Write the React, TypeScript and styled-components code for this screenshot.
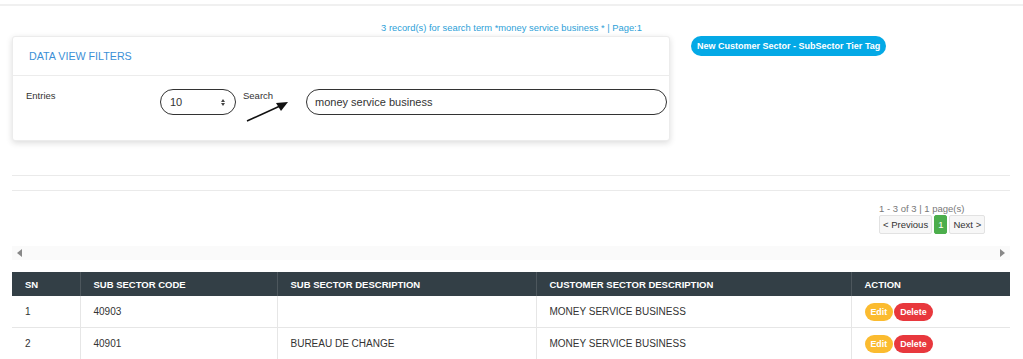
import React from "react";
import styled, { createGlobalStyle } from "styled-components";

const GlobalStyle = createGlobalStyle`
  body {
    margin: 0;
    background: #ffffff;
    font-family: "Liberation Sans", Arial, sans-serif;
    color: #333;
  }
`;

const Page = styled.div`
  width: 1023px;
  height: 359px;
  overflow: hidden;
`;

const TopRule = styled.div`
  margin-top: 4px;
  height: 2px;
  background: #f0f0f0;
`;

const Summary = styled.div`
  margin-top: 15px;
  text-align: center;
  font-size: 9.4px;
  line-height: 13px;
  color: #2e9fd8;
`;

const TopRow = styled.div`
  display: flex;
  align-items: flex-start;
  gap: 21px;
  padding: 2px 0 0 12px;
`;

const Card = styled.div`
  width: 658px;
  height: 105px;
  box-sizing: border-box;
  background: #fff;
  border: 1px solid #ececec;
  border-radius: 3px;
  box-shadow: 0 2px 6px rgba(0, 0, 0, 0.14);
`;

const CardHeader = styled.div`
  height: 39px;
  box-sizing: border-box;
  padding: 13px 0 0 16px;
  border-bottom: 1px solid #ececec;
  font-size: 10.7px;
  color: #3b8fd6;
`;

const CardBody = styled.div`
  display: flex;
  align-items: flex-start;
  padding: 13px 0 0 13px;
`;

const Label = styled.span<{ $width?: number }>`
  display: block;
  width: ${(p) => (p.$width ? `${p.$width}px` : "auto")};
  font-size: 9.5px;
  line-height: 12px;
  color: #333;
  padding-top: 1px;
`;

const SelectBox = styled.div`
  width: 76px;
  height: 26px;
  box-sizing: border-box;
  border: 1px solid #333;
  border-radius: 13px;
  display: flex;
  align-items: center;
  justify-content: space-between;
  padding: 0 10px 0 9px;
  font-size: 11px;
  color: #333;
  margin-right: 7px;
`;

const Spinner = styled.span`
  display: flex;
  flex-direction: column;
  gap: 1px;
  align-items: center;
`;

const Tri = styled.span<{ $up?: boolean }>`
  width: 0;
  height: 0;
  border-left: 2.5px solid transparent;
  border-right: 2.5px solid transparent;
  ${(p) =>
    p.$up ? "border-bottom: 3px solid #444;" : "border-top: 3px solid #444;"}
`;

const SearchWrap = styled.div`
  position: relative;
  width: 63px;
`;

const Arrow = styled.svg`
  position: absolute;
  left: 3px;
  top: 10px;
`;

const SearchInput = styled.div`
  width: 361px;
  height: 26px;
  box-sizing: border-box;
  border: 1px solid #333;
  border-radius: 13px;
  display: flex;
  align-items: center;
  padding-left: 8px;
  font-size: 11px;
  color: #333;
`;

const NewButton = styled.button`
  height: 20px;
  padding: 0 6px;
  border: none;
  border-radius: 10px;
  background: #04a9e6;
  color: #fff;
  font-family: inherit;
  font-size: 9px;
  font-weight: bold;
`;

const Rule = styled.div<{ $top: number }>`
  margin: ${(p) => p.$top}px 13px 0 12px;
  height: 1px;
  background: #eaeaea;
`;

const PagerBlock = styled.div`
  display: flex;
  flex-direction: column;
  align-items: flex-start;
  margin: 12px 0 0 879px;
`;

const PagerInfo = styled.div`
  font-size: 9.5px;
  color: #777;
  line-height: 12px;
`;

const PagerRow = styled.div`
  display: flex;
  gap: 2px;
`;

const PageBtn = styled.span<{ $active?: boolean }>`
  height: 19px;
  box-sizing: border-box;
  display: flex;
  align-items: center;
  padding: 0 3px;
  font-size: 9.5px;
  border-radius: 2px;
  border: 1px solid ${(p) => (p.$active ? "#4cae4c" : "#e2e2e2")};
  background: ${(p) => (p.$active ? "#4cae4c" : "#f7f7f7")};
  color: ${(p) => (p.$active ? "#fff" : "#333")};
`;

const ScrollBar = styled.div`
  margin: 12px 13px 0 12px;
  height: 14px;
  background: #fafafa;
  display: flex;
  align-items: center;
  justify-content: space-between;
  padding: 0 5px;
`;

const ScrollTri = styled.span<{ $left?: boolean }>`
  width: 0;
  height: 0;
  border-top: 4px solid transparent;
  border-bottom: 4px solid transparent;
  ${(p) =>
    p.$left
      ? "border-right: 5px solid #888;"
      : "border-left: 5px solid #888;"}
`;

const Table = styled.table`
  margin: 12px 0 0 12px;
  width: 998px;
  border-collapse: collapse;
  table-layout: fixed;
  font-size: 10px;
`;

const Th = styled.th<{ $w: number }>`
  width: ${(p) => p.$w}px;
  height: 24px;
  box-sizing: border-box;
  background: #333f46;
  color: #fff;
  text-align: left;
  font-weight: bold;
  font-size: 9.5px;
  padding: 0 0 0 13px;
  border-left: 1px solid #4d575d;
  &:first-child {
    border-left: none;
  }
`;

const Td = styled.td`
  height: 31px;
  padding: 0 0 0 13px;
  font-size: 10px;
  color: #333;
  border-top: 1px solid #e6e6e6;
  border-left: 1px solid #e6e6e6;
  &:first-child {
    border-left: none;
  }
  tr:first-child > & {
    border-top: none;
  }
`;

const ActionCell = styled.div`
  display: flex;
  gap: 1px;
`;

const Pill = styled.span<{ $bg: string }>`
  height: 18px;
  display: inline-flex;
  align-items: center;
  padding: 0 6px;
  border-radius: 9px;
  background: ${(p) => p.$bg};
  color: #fff;
  font-size: 8.8px;
  font-weight: bold;
`;

const rows = [
  { sn: 1, code: "40903", desc: "", customer: "MONEY SERVICE BUSINESS" },
  {
    sn: 2,
    code: "40901",
    desc: "BUREAU DE CHANGE",
    customer: "MONEY SERVICE BUSINESS",
  },
];

const App: React.FC = () => {
  return (
    <>
      <GlobalStyle />
      <Page>
        <TopRule />
        <Summary>
          3 record(s) for search term *money service business * | Page:1
        </Summary>
        <TopRow>
          <Card>
            <CardHeader>DATA VIEW FILTERS</CardHeader>
            <CardBody>
              <Label $width={134}>Entries</Label>
              <SelectBox>
                10
                <Spinner>
                  <Tri $up />
                  <Tri />
                </Spinner>
              </SelectBox>
              <SearchWrap>
                <Label>Search</Label>
                <Arrow width="44" height="24" viewBox="0 0 44 24">
                  <path d="M1 22 L34 7" stroke="#111" strokeWidth="1.6" />
                  <path d="M42 3 L30 4 L35 12 Z" fill="#111" />
                </Arrow>
              </SearchWrap>
              <SearchInput>money service business</SearchInput>
            </CardBody>
          </Card>
          <NewButton>New Customer Sector - SubSector Tier Tag</NewButton>
        </TopRow>
        <Rule $top={34} />
        <Rule $top={14} />
        <PagerBlock>
          <PagerInfo>1 - 3 of 3 | 1 page(s)</PagerInfo>
          <PagerRow>
            <PageBtn>&lt; Previous</PageBtn>
            <PageBtn $active>1</PageBtn>
            <PageBtn>Next &gt;</PageBtn>
          </PagerRow>
        </PagerBlock>
        <ScrollBar>
          <ScrollTri $left />
          <ScrollTri />
        </ScrollBar>
        <Table>
          <thead>
            <tr>
              <Th $w={68}>SN</Th>
              <Th $w={197}>SUB SECTOR CODE</Th>
              <Th $w={259}>SUB SECTOR DESCRIPTION</Th>
              <Th $w={315}>CUSTOMER SECTOR DESCRIPTION</Th>
              <Th $w={159}>ACTION</Th>
            </tr>
          </thead>
          <tbody>
            {rows.map((r) => (
              <tr key={r.sn}>
                <Td>{r.sn}</Td>
                <Td>{r.code}</Td>
                <Td>{r.desc}</Td>
                <Td>{r.customer}</Td>
                <Td>
                  <ActionCell>
                    <Pill $bg="#fbbb2f">Edit</Pill>
                    <Pill $bg="#e8383d">Delete</Pill>
                  </ActionCell>
                </Td>
              </tr>
            ))}
          </tbody>
        </Table>
      </Page>
    </>
  );
};

export default App;
